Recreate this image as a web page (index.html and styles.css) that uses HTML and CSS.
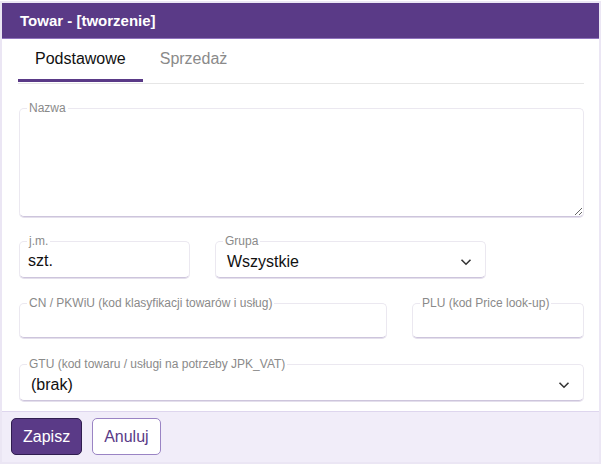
FILE: index.html
```html
<!DOCTYPE html>
<html lang="pl">
<head>
    <meta charset="UTF-8">
    <meta name="viewport" content="width=device-width, initial-scale=1.0">
    <title>Towar - [tworzenie]</title>
    <link rel="stylesheet" href="styles.css">
</head>
<body>
    <div class="dialog">
        <div class="dialogHeader">Towar - [tworzenie]</div>
        <div class="dialogBody">
            <div class="tabs">
                <div class="tab active">Podstawowe</div>
                <div class="tab">Sprzedaż</div>
            </div>

            <fieldset class="field nameField">
                <legend>Nazwa</legend>
                <textarea class="nameInput"></textarea>
            </fieldset>

            <div class="row">
                <fieldset class="field unitField">
                    <legend>j.m.</legend>
                    <div class="valueBox">szt.</div>
                </fieldset>
                <fieldset class="field groupField">
                    <legend>Grupa</legend>
                    <div class="selectBox">
                        <span>Wszystkie</span>
                        <svg class="chevron" width="12" height="8" viewBox="0 0 12 8"><path d="M1.5 1.8 L6 6.2 L10.5 1.8" fill="none" stroke="#333" stroke-width="1.6"/></svg>
                    </div>
                </fieldset>
            </div>

            <div class="row rowSecond">
                <fieldset class="field cnField">
                    <legend>CN / PKWiU (kod klasyfikacji towarów i usług)</legend>
                    <input type="text" class="textInput">
                </fieldset>
                <fieldset class="field pluField">
                    <legend>PLU (kod Price look-up)</legend>
                    <input type="text" class="textInput">
                </fieldset>
            </div>

            <fieldset class="field gtuField">
                <legend>GTU (kod towaru / usługi na potrzeby JPK_VAT)</legend>
                <div class="selectBox">
                    <span>(brak)</span>
                    <svg class="chevron" width="12" height="8" viewBox="0 0 12 8"><path d="M1.5 1.8 L6 6.2 L10.5 1.8" fill="none" stroke="#333" stroke-width="1.6"/></svg>
                </div>
            </fieldset>
        </div>
        <div class="dialogFooter">
            <button class="btn btnPrimary">Zapisz</button>
            <button class="btn btnOutline">Anuluj</button>
        </div>
    </div>
</body>
</html>
```

FILE: styles.css
```css
body {
    margin: 0;
    background: #fff;
    font-family: "Liberation Sans", Arial, sans-serif;
}
.dialog {
    width: 597px;
    margin-top: 1px;
    border: 2px solid #ebe6f4;
    background: #fff;
}
.dialogHeader {
    height: 35px;
    line-height: 35px;
    padding-left: 18px;
    background: #5a3a87;
    border-bottom: 1px solid #8f73bd;
    color: #fff;
    font-weight: bold;
    font-size: 15px;
}
.dialogBody {
    padding: 0 15px 10px 16px;
}
.tabs {
    display: flex;
    padding-bottom: 1px;
    border-bottom: 1px solid #e6e6e6;
    margin-bottom: 17px;
}
.tab {
    padding: 11px 17px 0;
    height: 29px;
    font-size: 16px;
    color: #8a8a8a;
    border-bottom: 3px solid transparent;
}
.tab.active {
    color: #111;
    border-bottom-color: #5a3a87;
}

.field {
    margin: 0 0 0 1px;
    padding: 0;
    min-width: 0;
    border: 1px solid #ebe8f0;
    border-bottom-color: #cdc5dc;
    border-radius: 5px;
    box-shadow: 0 1px 0 #e4dfec;
}
.field legend {
    margin-left: 7px;
    padding: 0 2px;
    font-size: 12px;
    line-height: 14px;
    color: #8a8a8a;
}
.nameInput {
    display: block;
    width: 100%;
    height: 101px;
    box-sizing: border-box;
    margin: 0;
    padding: 0 0 0 8px;
    border: none;
    border-radius: 5px;
    outline: none;
    resize: vertical;
    font-family: inherit;
    font-size: 16px;
}

.row {
    display: flex;
    gap: 24px;
    margin-top: 17px;
}
.rowSecond {
    margin-top: 18px;
}
.unitField {
    width: 169px;
}
.groupField {
    width: 269px;
}
.cnField {
    width: 366px;
}
.pluField {
    width: 170px;
}
.textInput {
    display: block;
    width: 100%;
    height: 27px;
    box-sizing: border-box;
    margin: 0;
    padding: 0 8px 2px;
    border: none;
    border-radius: 5px;
    outline: none;
    font-family: inherit;
    font-size: 16px;
    color: #111;
    background: transparent;
}
.valueBox {
    height: 27px;
    padding: 0 8px 2px;
    box-sizing: border-box;
    line-height: 25px;
    font-size: 16px;
    color: #111;
}
.selectBox {
    display: flex;
    align-items: center;
    justify-content: space-between;
    height: 27px;
    padding: 0 13px 2px 11px;
    font-size: 16px;
    color: #111;
}
.chevron {
    display: block;
}
.gtuField {
    margin-top: 19px;
}

.dialogFooter {
    display: flex;
    gap: 10px;
    padding: 6px 9px 7px;
    background: #f1edf9;
    border-top: 1px solid #ded6ee;
}
.btn {
    height: 37px;
    padding: 0 11px;
    border-radius: 5px;
    font-family: inherit;
    font-size: 16px;
}
.btnPrimary {
    background: #5a3a87;
    border: 1px solid #2f1d4f;
    color: #fff;
}
.btnOutline {
    background: #fff;
    border: 1px solid #9a84c4;
    color: #5a3a87;
}
```
